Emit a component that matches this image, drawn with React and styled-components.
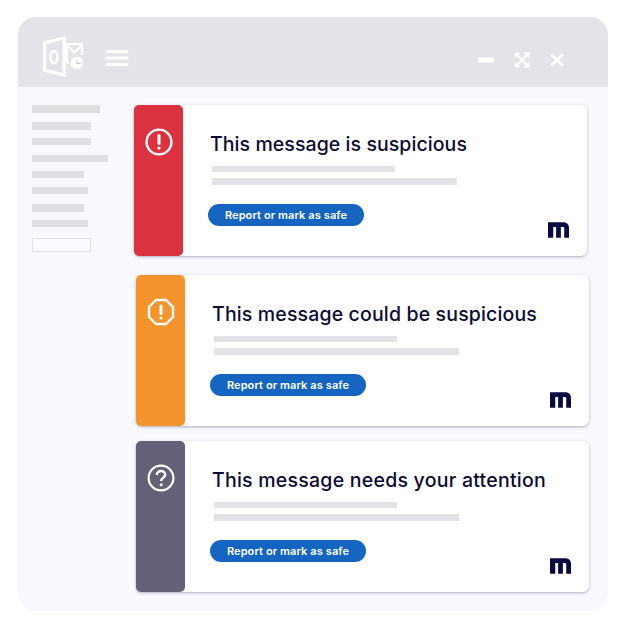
import React from "react";
import styled, { createGlobalStyle } from "styled-components";

const Global = createGlobalStyle`
  html, body { margin: 0; padding: 0; background: #fff; }
  body { font-family: "Inter", "Liberation Sans", sans-serif; }
`;

const Page = styled.div`
  width: 625px;
  height: 625px;
  padding: 17px 17px 14px 18px;
  box-sizing: border-box;
  background: #fff;
`;

const Window = styled.div`
  width: 590px;
  height: 594px;
  border-radius: 18px;
  overflow: hidden;
  background: #f7f9fe;
  display: flex;
  flex-direction: column;
`;

const Header = styled.header`
  height: 70px;
  flex: none;
  background: #e3e3e8;
  display: flex;
  align-items: center;
  padding: 8px 44px 0 24px;
  box-sizing: border-box;
`;

const Controls = styled.div`
  margin-left: auto;
  display: flex;
  align-items: center;
  gap: 20px;
  margin-top: 8px;
`;

const Body = styled.div`
  flex: 1;
  display: flex;
  padding-top: 18px;
`;

const Sidebar = styled.aside`
  width: 116px;
  flex: none;
  padding-left: 14px;
  box-sizing: border-box;
  display: flex;
  flex-direction: column;
`;

const SideBar = styled.div`
  height: ${(p) => p.$h}px;
  width: ${(p) => p.$w}px;
  margin-bottom: ${(p) => p.$gap}px;
  background: #dedfe0;
`;

const SideButton = styled.div`
  width: 59px;
  height: 14px;
  box-sizing: border-box;
  margin-top: 3px;
  background: #fbfcff;
  border: 1px solid #dfe0e3;
`;

const Main = styled.main`
  flex: 1;
  display: flex;
  flex-direction: column;
`;

const Card = styled.section`
  width: 453px;
  height: 151px;
  flex: none;
  margin-left: ${(p) => p.$shift}px;
  margin-bottom: ${(p) => p.$gap}px;
  background: #fff;
  border-radius: 6px;
  box-shadow: 0 1px 3px rgba(60, 60, 80, 0.4);
  display: flex;
`;

const Accent = styled.div`
  width: 49px;
  flex: none;
  background: ${(p) => p.$color};
  border-radius: 5px;
  display: flex;
  justify-content: center;
  padding-top: 23px;
  box-sizing: border-box;
`;

const Content = styled.div`
  flex: 1;
  position: relative;
  padding: 26px 0 0 27px;
  box-sizing: border-box;
`;

const Title = styled.h2`
  margin: 0;
  height: 26px;
  font-size: 19.5px;
  line-height: 26px;
  font-weight: 460;
  color: #0b0b33;
  white-space: nowrap;
  letter-spacing: ${(p) => p.$ls}px;
`;

const Line = styled.div`
  height: ${(p) => p.$h}px;
  width: ${(p) => p.$w}px;
  margin: 9px 0 0 2px;
  background: #e2e2e7;
  & + & { margin-top: 6px; }
`;

const ActionButton = styled.button`
  display: block;
  margin: 19px 0 0 -2px;
  width: 156px;
  height: 22px;
  padding: 0;
  border: none;
  border-radius: 11px;
  background: #1565c0;
  color: #fff;
  font: 600 11px "Inter", "Liberation Sans", sans-serif;
  letter-spacing: 0.1px;
`;

const LogoMark = styled.svg`
  position: absolute;
  right: 18px;
  bottom: 18px;
  width: 21px;
  height: 16px;
`;

const Logo = () => (
  <LogoMark viewBox="0 0 22 16">
    <path fill="#0a0a40" d="M0 0H16C20 0 22 2.5 22 6V16H17V6C17 5.2 16.5 4.8 15.5 4.8H13.5V16H8.5V4.8H5.5V16H0Z" />
  </LogoMark>
);

const AlertCircle = () => (
  <svg width="28" height="28" viewBox="0 0 28 28" fill="none" stroke="#fff" strokeWidth="2.4">
    <circle cx="14" cy="14" r="12.4" />
    <path d="M14 7.5V15.5" strokeWidth="3" strokeLinecap="round" />
    <circle cx="14" cy="20" r="1.6" fill="#fff" stroke="none" />
  </svg>
);

const AlertOctagon = () => (
  <svg width="28" height="28" viewBox="0 0 28 28" fill="none" stroke="#fff" strokeWidth="2.4">
    <path d="M9 2H19L26 9V19L19 26H9L2 19V9Z" strokeLinejoin="round" />
    <path d="M14 8V15.5" strokeWidth="3" strokeLinecap="round" />
    <circle cx="14" cy="20" r="1.6" fill="#fff" stroke="none" />
  </svg>
);

const HelpCircle = () => (
  <svg width="28" height="28" viewBox="0 0 28 28" fill="none" stroke="#fff" strokeWidth="2.2">
    <circle cx="14" cy="14" r="12.4" />
    <path d="M9.8 11C9.8 8.6 11.6 7 14 7C16.4 7 18.2 8.6 18.2 10.8C18.2 13.6 14.2 13.8 14.2 17" strokeWidth="2.4" />
    <circle cx="14.2" cy="20.8" r="1.5" fill="#fff" stroke="none" />
  </svg>
);

const Brand = styled.svg`
  margin-right: 20px;
`;

const Menu = styled.svg`
  margin-top: 4px;
`;

const OutlookIcon = () => (
  <Brand width="43" height="41" viewBox="0 0 43 41">
    <path fill="#fff" fillRule="evenodd" d="M1 5.5L24 0V41L1 35.5ZM4 8V33L20.5 37V4Z" />
    <ellipse cx="12" cy="21" rx="3.6" ry="6" fill="none" stroke="#fff" strokeWidth="2.6" />
    <path fill="none" stroke="#fff" strokeWidth="2.2" d="M24 8H40V19M25 9L32.5 16.5L40 9M25 27H28" />
    <path fill="none" stroke="#fff" strokeWidth="2.2" d="M25 8V27" />
    <circle cx="35" cy="27" r="6.8" fill="#fff" stroke="#e3e3e8" strokeWidth="1" />
    <path stroke="#c9c9d0" strokeWidth="1.2" fill="none" d="M35 23.5V27.5H39" />
  </Brand>
);

const Hamburger = () => (
  <Menu width="24" height="18" viewBox="0 0 24 18" stroke="#fff" strokeWidth="2.8" strokeLinecap="round">
    <path d="M2 2.5H22M2 9H22M2 15.5H22" />
  </Menu>
);

const Minimize = () => (
  <svg width="16" height="16" viewBox="0 0 16 16"><rect y="5.5" width="16" height="5" rx="1" fill="#fff" /></svg>
);

const Expand = () => (
  <svg width="16" height="16" viewBox="0 0 17 17" fill="#fff" stroke="#fff" strokeWidth="2">
    <path d="M1 1H6L1 6ZM16 1H11L16 6ZM1 16H6L1 11ZM16 16H11L16 11Z" strokeWidth="1" />
    <path d="M3 3L14 14M14 3L3 14" />
  </svg>
);

const Close = () => (
  <svg width="14" height="14" viewBox="0 0 15 15" stroke="#fff" strokeWidth="3">
    <path d="M1.5 1.5L13.5 13.5M13.5 1.5L1.5 13.5" />
  </svg>
);

const sideRows = [
  [68, 8, 8.5], [59, 8, 8], [59, 7, 10], [76, 7, 9], [52, 7, 9],
  [56, 7, 10], [52, 8, 8], [56, 7, 8],
];

const cards = [
  { color: "#dc323f", Icon: AlertCircle, title: "This message is suspicious", ls: 0.07, shift: 0, gap: 19 },
  { color: "#f4942d", Icon: AlertOctagon, title: "This message could be suspicious", ls: 0.15, shift: 2, gap: 15 },
  { color: "#646278", Icon: HelpCircle, title: "This message needs your attention", ls: 0.24, shift: 2, gap: 0 },
];

export default function App() {
  return (
    <Page>
      <Global />
      <Window>
        <Header>
          <OutlookIcon />
          <Hamburger />
          <Controls>
            <Minimize />
            <Expand />
            <Close />
          </Controls>
        </Header>
        <Body>
          <Sidebar>
            {sideRows.map(([w, h, gap], i) => (
              <SideBar key={i} $w={w} $h={h} $gap={gap} />
            ))}
            <SideButton />
          </Sidebar>
          <Main>
            {cards.map(({ color, Icon, title, ls, shift, gap }) => (
              <Card key={title} $shift={shift} $gap={gap}>
                <Accent $color={color}>
                  <Icon />
                </Accent>
                <Content>
                  <Title $ls={ls}>{title}</Title>
                  <Line $w={183} $h={6} />
                  <Line $w={245} $h={7} />
                  <ActionButton>Report or mark as safe</ActionButton>
                  <Logo />
                </Content>
              </Card>
            ))}
          </Main>
        </Body>
      </Window>
    </Page>
  );
}
